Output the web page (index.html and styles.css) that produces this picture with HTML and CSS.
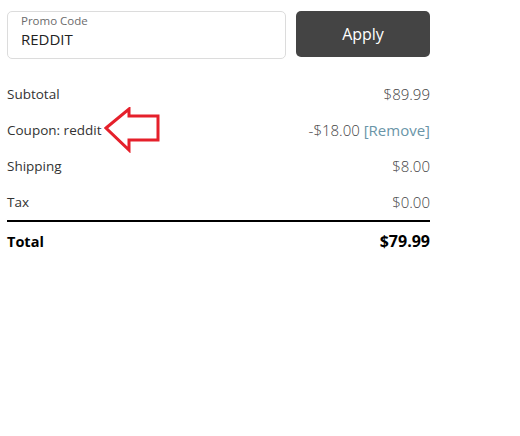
FILE: index.html
```html
<!DOCTYPE html>
<html>
<head>
<meta charset="utf-8">
<link rel="stylesheet" href="styles.css">
</head>
<body>
<div class="cart">
  <div class="promo">
    <div class="field">
      <span class="label">Promo Code</span>
      <span class="value">REDDIT</span>
    </div>
    <button class="apply">Apply</button>
  </div>
  <div class="rows">
    <div class="row"><span>Subtotal</span><span class="amt">$89.99</span></div>
    <div class="row coupon">
      <span class="name">Coupon: reddit
        <svg class="arrow" width="58" height="46" viewBox="0 0 58 46">
          <path d="M2 21 L25 2 L25 9 L54 9 L54 33 L25 33 L25 43 Z" fill="#fff" stroke="#e5202b" stroke-width="3" stroke-linejoin="miter"/>
        </svg>
      </span>
      <span class="amt">-$18.00 <span class="remove">[Remove]</span></span>
    </div>
    <div class="row"><span>Shipping</span><span class="amt">$8.00</span></div>
    <div class="row"><span>Tax</span><span class="amt">$0.00</span></div>
    <div class="row total"><span>Total</span><span class="grand">$79.99</span></div>
  </div>
</div>
</body>
</html>
```

FILE: styles.css
```css
body {
  margin: 0;
  background: #fff;
  font-family: "Open Sans", "Noto Sans", sans-serif;
  color: #333;
}
.cart {
  width: 423px;
  padding: 11px 0 0 7px;
}
.promo {
  display: flex;
  gap: 10px;
  align-items: flex-start;
}
.field {
  flex: 0 0 279px;
  height: 48px;
  box-sizing: border-box;
  border: 1px solid #dcdcdc;
  border-radius: 5px;
  padding: 1px 13px 0;
  display: flex;
  flex-direction: column;
}
.label {
  font-size: 11.5px;
  color: #6b6b6b;
  line-height: 16px;
}
.value {
  font-size: 15px;
  color: #222;
  line-height: 20px;
}
.apply {
  flex: 1;
  height: 46px;
  background: #444;
  color: #fff;
  border: none;
  border-radius: 5px;
  font-family: inherit;
  font-size: 16px;
}
.rows {
  margin-top: 17px;
}
.row {
  display: flex;
  justify-content: space-between;
  align-items: center;
  height: 36px;
  font-size: 13.5px;
}
.amt {
  color: #444;
  font-size: 15px;
  font-weight: 300;
}
.remove {
  color: #6a95a8;
  font-weight: 400;
}
.name {
  position: relative;
}
.arrow {
  position: absolute;
  left: 97px;
  top: -14px;
}
.total {
  border-top: 2px solid #000;
  height: 38px;
  font-weight: 700;
  font-size: 14.5px;
  color: #000;
}
.grand {
  font-size: 16px;
}
```
